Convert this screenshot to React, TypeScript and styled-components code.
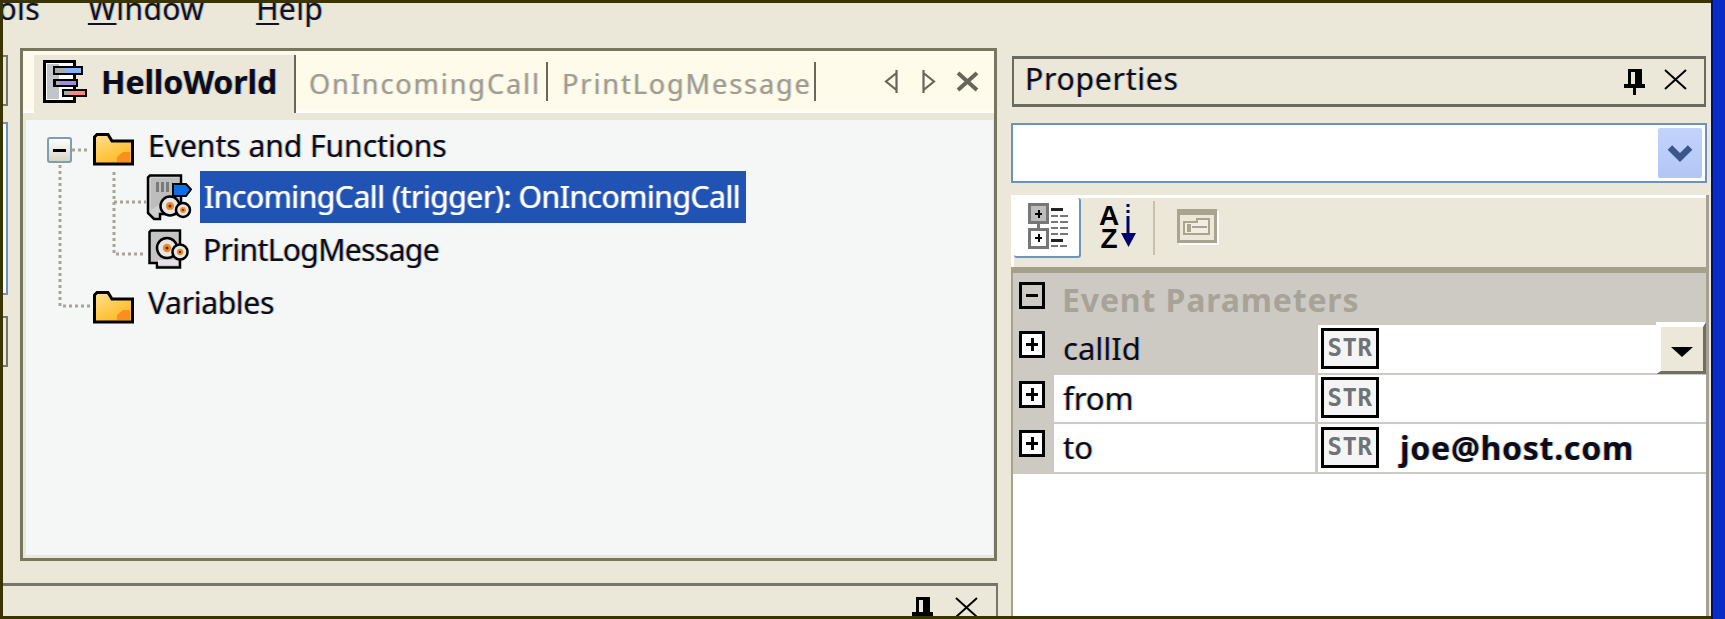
import React from "react";
import styled, { createGlobalStyle } from "styled-components";

const Global = createGlobalStyle`
  html, body { margin: 0; padding: 0; background: #ece8d9; }
  * { box-sizing: border-box; }
`;

const FONT = `"Noto Sans", "Liberation Sans", sans-serif`;
const fringe = `-1px 0 rgba(240,160,60,.55), 1px 0 rgba(50,160,240,.55)`;

const Screen = styled.div`
  width: 1725px; height: 619px; overflow: hidden; display: flex;
  font-family: ${FONT}; color: #0b0b1c; background: #ece8d9;
`;
const Frame = styled.div`
  width: 1711px; height: 619px; display: flex;
  border-top: 3px solid #3a3500; border-bottom: 3px solid #3a3500; border-left: 3px solid #3a3500;
`;
const BlueEdge = styled.div`
  width: 14px; height: 619px; background: #0a2cc6; border-left: 2px solid #04106a;
`;
const LeftPart = styled.div`
  width: 1010px; display: flex; flex-direction: column; flex: none;
`;
const MenuBar = styled.div`
  height: 45px; display: flex; align-items: flex-start; overflow: hidden; flex: none;
`;
const MenuItem = styled.span<{ $ml: number }>`
  margin-left: ${(p) => p.$ml}px; margin-top: -15px; font-size: 30px; line-height: 41px; color: #10102a;
  text-shadow: ${fringe}; letter-spacing: .4px;
  u { text-decoration-thickness: 2px; text-underline-offset: 3px; }
`;
const TopRow = styled.div`
  display: flex; height: 513px; flex: none;
`;
const LeftDock = styled.div`
  width: 17px; display: flex; flex-direction: column; padding-top: 7px; flex: none;
`;
const DockTab = styled.div`
  width: 5px; height: 51px; border-right: 2px solid #76766c; border-top: 2px solid #76766c; border-bottom: 2px solid #76766c; flex: none;
`;
const DockActive = styled.div`
  width: 5px; height: 173px; margin-top: 16px; margin-bottom: 21px; border: 2px solid #6b93bd; border-left: 0; background: #fff; flex: none;
`;
const TabPanel = styled.div`
  width: 977px; height: 513px; border: 3px solid #77775f; background: #ece8d9; display: flex; flex-direction: column; flex: none;
`;
const TabBar = styled.div`
  height: 62px; background: linear-gradient(#fffbea 59px, #fff 59px); display: flex; padding-left: 11px; padding-top: 4px; flex: none;
`;
const ActiveTab = styled.div`
  width: 262px; height: 58px; background: #ece8d9; border-right: 2px solid #68685a; display: flex; align-items: center; gap: 14px; padding-left: 9px; padding-bottom: 6px; font-weight: 700; font-size: 32px; letter-spacing: -.1px; text-shadow: ${fringe}; flex: none;
`;
const Tab = styled.div<{ $w: number; $pl: number }>`
  width: ${(p) => p.$w}px; height: 39px; margin-top: 7px; border-right: 2px solid #68685a; padding-left: ${(p) => p.$pl}px;
  display: flex; align-items: center; font-size: 27px; color: #a09c92; letter-spacing: 1.95px; white-space: nowrap; text-shadow: -1px 0 rgba(240,190,120,.4), 1px 0 rgba(120,190,240,.4); padding-top: 3px; flex: none;
`;
const TabNav = styled.div`
  margin-left: 68px; margin-top: 14px; display: flex; align-items: flex-start; flex: none;
`;
const Tree = styled.div`
  position: relative; margin: 7px 1px 3px 3px; padding-top: 8px; width: 967px; flex: 1; background: #f5f6f6; font-size: 30px;
`;
const Connectors = styled.svg`
  position: absolute; left: 0; top: 0; pointer-events: none;
`;
const TreeRow = styled.div<{ $h: number; $pl: number; $mt?: number }>`
  height: ${(p) => p.$h}px; margin-top: ${(p) => p.$mt ?? 0}px; padding-left: ${(p) => p.$pl}px; display: flex; align-items: center; white-space: nowrap;
`;
const Expander = styled.span`
  position: relative; width: 25px; height: 26px; margin-right: 21px; border: 2px solid #7f9db9; border-radius: 3px;
  background: linear-gradient(#fff, #d8d4c4); flex: none;
  &::after { content: ""; position: absolute; left: 4px; right: 4px; top: 10px; height: 3px; background: #000; }
`;
const TreeLabel = styled.span<{ $selected?: boolean; $ml: number; $ls?: number; $up?: number }>`
  margin-left: ${(p) => p.$ml}px; margin-top: ${(p) => -(p.$up ?? 0)}px; letter-spacing: ${(p) => p.$ls ?? 0}px; text-shadow: ${fringe};
  ${(p) => p.$selected ? `background: #2153b5; color: #fff; height: 52px; line-height: 52px; padding: 0 6px 0 4px; text-shadow: -1px 0 rgba(230,190,200,.5), 1px 0 rgba(120,200,250,.5);` : ""}
`;
const Icon = styled.svg`
  flex: none; display: block;
`;
const BottomPanel = styled.div`
  margin-top: 22px; width: 995px; height: 33px; border-top: 3px solid #76766c; border-right: 2px solid #76766c;
  display: flex; justify-content: flex-end; align-items: flex-start; gap: 22px; padding: 11px 18px 0 0; overflow: hidden; flex: none;
`;
const RightPart = styled.div`
  width: 695px; padding-top: 53px; display: flex; flex-direction: column; flex: none;
`;
const TitleBox = styled.div`
  width: 694px; height: 51px; margin-left: -1px; border: 2px solid #6a6a60; border-top-width: 3px; border-bottom-width: 3px; display: flex; align-items: center; padding-left: 11px; padding-right: 17px; font-size: 30px; text-shadow: ${fringe}; letter-spacing: .8px; flex: none;
`;
const TitleText = styled.span`
  flex: 1; margin-top: -6px;
`;
const TitleButtons = styled.div`
  display: flex; gap: 19px; align-items: flex-start;
`;
const Combo = styled.div`
  width: 696px; height: 60px; margin: 16px 0 0 -2px; background: #fff; border: 2px solid #6b93bd; display: flex; justify-content: flex-end; padding: 3px 3px; flex: none;
`;
const ComboButton = styled.div`
  width: 44px; height: 50px; background: linear-gradient(#c3d4fb, #b2c6f7); display: flex; align-items: center; justify-content: center; border-radius: 2px;
`;
const Sheet = styled.div`
  margin-top: 12px; margin-left: -2px; width: 698px; flex: 1; display: flex; flex-direction: column; border-right: 3px solid #a5a08f;
`;
const Toolbar = styled.div`
  height: 72px; background: #ece8d9; border-top: 3px solid #fff; border-left: 3px solid #fff; display: flex; align-items: flex-start; flex: none;
`;
const ToolActive = styled.div`
  width: 67px; height: 60px; background: #fff; border-right: 2px solid #6e96bd; border-bottom: 2px solid #6e96bd; border-radius: 3px; display: flex; align-items: center; justify-content: center; padding-left: 3px; padding-bottom: 2px; flex: none;
`;
const ToolIcon = styled.div<{ $ml: number; $mt: number }>`
  margin-left: ${(p) => p.$ml}px; margin-top: ${(p) => p.$mt}px; flex: none;
`;
const ToolSep = styled.div`
  width: 2px; height: 54px; margin-left: 16px; margin-top: 3px; background: #c7c0ab; flex: none;
`;
const GridBand = styled.div`
  height: 6px; background: #a59f8e; flex: none;
`;
const GridBody = styled.div`
  flex: 1; display: flex; flex-direction: column; background: #fff; border-left: 2px solid #a5a290;
`;
const GroupRow = styled.div`
  height: 52px; background: #cdcac4; display: flex; align-items: center; padding-left: 6px; flex: none;
`;
const GroupTitle = styled.span`
  margin-left: 17px; font-weight: 700; font-size: 32px; color: #a8a399; letter-spacing: .85px;
`;
const BoxBtn = styled.span<{ $plus?: boolean }>`
  position: relative; width: 26px; height: 27px; border: 3px solid #000; background: #fff; flex: none; align-self: flex-start; margin-top: 6px; margin-left: 6px;
  &::before { content: ""; position: absolute; left: 4px; right: 4px; top: 9px; height: 3px; background: #000; }
  ${(p) => p.$plus ? `&::after { content: ""; position: absolute; top: 4px; bottom: 4px; left: 8.5px; width: 3px; background: #000; }` : ""}
`;
const GroupBox = styled(BoxBtn)`
  background: #cdcac4; margin-left: 0; margin-top: 9px;
`;
const PropRow = styled.div<{ $h: number }>`
  position: relative; height: ${(p) => p.$h}px; display: grid; grid-template-columns: 41px 261px 1fr; column-gap: 0; background: #cdcac4; padding-bottom: 2px; flex: none;
`;
const Margin = styled.div`
  background: #cdcac4; display: flex;
`;
const PropName = styled.div<{ $selected?: boolean }>`
  background: ${(p) => (p.$selected ? "#cdcac4" : "#fff")}; display: flex; align-items: center; padding-left: 9px; font-size: 31px; padding-bottom: 2px; text-shadow: ${fringe};
`;
const PropValue = styled.div`
  margin-left: 3px; background: #fff; display: flex; align-items: center; padding-left: 3px; font-weight: 700; font-size: 32px; letter-spacing: .75px; text-shadow: ${fringe};
`;
const StrBadge = styled.span`
  width: 58px; height: 41px; border: 3px solid #000; background: #f5f5f5; display: flex; align-items: center; justify-content: center;
  font-family: "DejaVu Sans Mono", monospace; font-weight: 700; font-size: 24px; line-height: 1; color: #6e7378; letter-spacing: .5px; text-shadow: none; margin-top: -2px; flex: none;
`;
const ValueText = styled.span`
  margin-left: 21px; margin-top: -2px;
`;
const DropBtn = styled.div`
  position: absolute; right: 0; top: -3px; width: 50px; height: 52px; background: #ece8d9;
  border-top: 5px solid #fff; border-left: 5px solid #fff; border-right: 3px solid #716f64; border-bottom: 3px solid #716f64;
  display: flex; align-items: center; justify-content: center;
`;
const Triangle = styled.span`
  width: 0; height: 0; border-left: 11px solid transparent; border-right: 11px solid transparent; border-top: 10px solid #000; margin-top: 6px;
`;

const Folder = () => (
  <Icon width="41" height="33" viewBox="0 0 41 33">
    <defs>
      <linearGradient id="fg" x1="0" y1="0" x2="0.6" y2="1">
        <stop offset="0" stopColor="#ffe092" /><stop offset="1" stopColor="#ffb91e" />
      </linearGradient>
    </defs>
    <path d="M1.5 31V4L4 1.5H15L19 8H39.5V31Z" fill="url(#fg)" stroke="#000" strokeWidth="3" />
    <path d="M24 29V24L30 19H37V29Z" fill="#f88f20" />
  </Icon>
);

const Disk = ({ cx, cy, r }: { cx: number; cy: number; r: number }) => (
  <g>
    <circle cx={cx} cy={cy} r={r} fill="#e8e4e8" stroke="#000" strokeWidth="2.5" />
    <circle cx={cx} cy={cy} r={r * 0.42} fill="#ee8a22" />
    <circle cx={cx} cy={cy} r={r * 0.16} fill="#553300" />
  </g>
);

const TriggerIcon = () => (
  <Icon width="46" height="47" viewBox="0 0 46 47">
    <path d="M2 3.5L4 1.5H35V40H14V45H8L2 39Z" fill="#cfcfcf" stroke="#000" strokeWidth="2.5" />
    <path d="M5 4H33V30H14L5 36Z" fill="#bdbdbd" />
    <path d="M10 8h3v10h-3zM15 8h3v10h-3zM20 8h3v10h-3z" fill="#7a7a7a" />
    <path d="M27 10H40L45 15.5L40 22H27Z" fill="#0a6fe0" stroke="#000" strokeWidth="2" />
    <Disk cx={24} cy={32} r={9.5} />
    <Disk cx={37} cy={36} r={7} />
  </Icon>
);

const FuncIcon = () => (
  <Icon width="42" height="40" viewBox="0 0 42 40">
    <path d="M1.5 3L3 1.5H32V38.5H9V34H1.5Z" fill="#c4c4c4" stroke="#000" strokeWidth="2.5" />
    <path d="M10 31H30V36H10Z" fill="#eadfe8" />
    <Disk cx={19} cy={19} r={10} />
    <Disk cx={32} cy={23} r={7.5} />
  </Icon>
);

const TabIcon = () => (
  <Icon width="44" height="43" viewBox="0 0 44 43" shapeRendering="crispEdges">
    <rect x="1.5" y="1.5" width="30" height="40" fill="#fff" stroke="#000" strokeWidth="3" />
    <rect x="4" y="4" width="12" height="35" fill="#c3c3cb" />
    <rect x="10" y="6" width="30" height="9" fill="#000" />
    <rect x="12" y="8" width="10" height="5" fill="#aaa" />
    <rect x="22" y="8" width="16" height="5" fill="#7fb4ff" />
    <rect x="10" y="19" width="25" height="8" fill="#000" />
    <rect x="13" y="21" width="4" height="4" fill="#aaa" />
    <rect x="17" y="21" width="16" height="4" fill="#9c8ce8" />
    <rect x="19" y="29" width="25" height="8" fill="#000" />
    <rect x="21" y="31" width="6" height="4" fill="#aaa" />
    <rect x="27" y="31" width="15" height="4" fill="#f28a8a" />
  </Icon>
);

const ArrowLeft = () => (
  <Icon width="14" height="25" viewBox="0 0 14 25">
    <path d="M12.5 1V24M12.5 4L2 12.5L12.5 21" fill="none" stroke="#66665a" strokeWidth="2.2" />
  </Icon>
);
const ArrowRight = () => (
  <Icon width="14" height="25" viewBox="0 0 14 25" style={{ marginLeft: 24 }}>
    <path d="M1.5 1V24M1.5 4L12 12.5L1.5 21" fill="none" stroke="#66665a" strokeWidth="2.2" />
  </Icon>
);
const CloseBold = () => (
  <Icon width="23" height="21" viewBox="0 0 23 21" style={{ marginLeft: 20, marginTop: 2 }}>
    <path d="M2 2L21 19M21 2L2 19" stroke="#66665a" strokeWidth="4" />
  </Icon>
);
const Pin = () => (
  <Icon width="21" height="26" viewBox="0 0 21 26" shapeRendering="crispEdges">
    <path d="M5 1.5H16V17H5Z" fill="#ece8d9" stroke="#000" strokeWidth="3" />
    <rect x="11" y="3" width="4" height="14" fill="#000" />
    <rect x="0" y="15" width="21" height="4" fill="#000" />
    <rect x="9" y="19" width="3" height="7" fill="#000" />
  </Icon>
);
const CloseThin = () => (
  <Icon width="23" height="21" viewBox="0 0 23 21">
    <path d="M1 1L22 20M22 1L1 20" stroke="#000" strokeWidth="2" />
  </Icon>
);
const Chevron = () => (
  <Icon width="26" height="22" viewBox="0 0 28 24">
    <path d="M3 6L14 17L25 6" fill="none" stroke="#39578c" strokeWidth="7" />
  </Icon>
);
const CategorizedIcon = () => (
  <Icon width="41" height="46" viewBox="0 0 41 46" shapeRendering="crispEdges">
    <rect x="1.5" y="1.5" width="18" height="18" fill="#bdbdbd" stroke="#777" strokeWidth="3" />
    <path d="M7 10h7v2h-7zM9.5 7h2v8h-2z" fill="#000" />
    <rect x="9" y="20" width="3" height="6" fill="#777" />
    <rect x="1.5" y="26" width="18" height="18" fill="#fff" stroke="#777" strokeWidth="3" />
    <path d="M7 34h7v2h-7zM9.5 31h2v8h-2z" fill="#000" />
    <path d="M23 5h12v3H23z" fill="#222" />
    <path d="M23 12h7v2h-7zM32 12h8v2h-8zM23 18h7v2h-7zM32 18h8v2h-8zM23 24h7v2h-7zM32 24h8v2h-8zM23 30h7v2h-7zM32 30h8v2h-8zM23 42h7v2h-7zM32 42h7v2h-7z" fill="#777" />
    <path d="M23 36h12v3H23z" fill="#222" />
  </Icon>
);
const SortIcon = () => (
  <Icon width="38" height="44" viewBox="0 0 38 44">
    <text x="10" y="21" textAnchor="middle" fontFamily="Liberation Sans" fontWeight="700" fontSize="28" fill="#000">A</text>
    <text x="10" y="44" textAnchor="middle" fontFamily="Liberation Sans" fontWeight="700" fontSize="28" fill="#000">Z</text>
    <path d="M29 0v3M29 6v3M29 12v22" stroke="#00006a" strokeWidth="3" />
    <path d="M22 29H37L29.5 43Z" fill="#00006a" />
  </Icon>
);
const PagesIcon = () => (
  <Icon width="42" height="36" viewBox="0 0 42 36" shapeRendering="crispEdges">
    <rect x="2" y="2" width="40" height="34" fill="#fff" />
    <rect x="0" y="0" width="40" height="34" fill="#ece8d9" />
    <rect x="0" y="0" width="40" height="6" fill="#a8a490" />
    <rect x="1.5" y="1.5" width="37" height="31" fill="none" stroke="#a8a490" strokeWidth="3" />
    <path d="M7 13H20V10H32V25H7Z" fill="#f1eee2" stroke="#a8a490" strokeWidth="2" />
    <path d="M11 16h2v2h-2zM11 20h2v2h-2zM15 18H30" stroke="#a8a490" strokeWidth="2" />
  </Icon>
);

export default function App() {
  return (
    <Screen>
      <Global />
      <Frame>
        <LeftPart>
          <MenuBar>
            <MenuItem $ml={-38}>Tools</MenuItem>
            <MenuItem $ml={48}><u>W</u>indow</MenuItem>
            <MenuItem $ml={52}><u>H</u>elp</MenuItem>
          </MenuBar>
          <TopRow>
            <LeftDock>
              <DockTab />
              <DockActive />
              <DockTab />
            </LeftDock>
            <TabPanel>
              <TabBar>
                <ActiveTab><TabIcon />HelloWorld</ActiveTab>
                <Tab $w={252} $pl={13}>OnIncomingCall</Tab>
                <Tab $w={268} $pl={14}>PrintLogMessage</Tab>
                <TabNav><ArrowLeft /><ArrowRight /><CloseBold /></TabNav>
              </TabBar>
              <Tree>
                <Connectors width="130" height="198">
                  <g fill="none" stroke="#a8a498" strokeWidth="3" strokeDasharray="3 3">
                    <path d="M46 30H64" />
                    <path d="M34 45V186H64" />
                    <path d="M88 52V134H120" />
                    <path d="M88 82H120" />
                  </g>
                </Connectors>
                <TreeRow $h={43} $pl={21}>
                  <Expander />
                  <Folder />
                  <TreeLabel $ml={14} $up={8}>Events and Functions</TreeLabel>
                </TreeRow>
                <TreeRow $h={52} $pl={120}>
                  <TriggerIcon />
                  <TreeLabel $selected $ml={8} $ls={-0.4}>IncomingCall (trigger): OnIncomingCall</TreeLabel>
                </TreeRow>
                <TreeRow $h={52} $pl={122}>
                  <FuncIcon />
                  <TreeLabel $ml={13} $ls={-0.6}>PrintLogMessage</TreeLabel>
                </TreeRow>
                <TreeRow $h={52} $pl={67} $mt={6}>
                  <Folder />
                  <TreeLabel $ml={14} $ls={-0.3} $up={9}>Variables</TreeLabel>
                </TreeRow>
              </Tree>
            </TabPanel>
          </TopRow>
          <BottomPanel>
            <Pin />
            <CloseThin />
          </BottomPanel>
        </LeftPart>
        <RightPart>
          <TitleBox>
            <TitleText>Properties</TitleText>
            <TitleButtons><Pin /><CloseThin /></TitleButtons>
          </TitleBox>
          <Combo><ComboButton><Chevron /></ComboButton></Combo>
          <Sheet>
            <Toolbar>
              <ToolActive><CategorizedIcon /></ToolActive>
              <ToolIcon $ml={18} $mt={6}><SortIcon /></ToolIcon>
              <ToolSep />
              <ToolIcon $ml={22} $mt={11}><PagesIcon /></ToolIcon>
            </Toolbar>
            <GridBand />
            <GridBody>
              <GroupRow>
                <GroupBox />
                <GroupTitle>Event Parameters</GroupTitle>
              </GroupRow>
              <PropRow $h={50}>
                <Margin><BoxBtn $plus /></Margin>
                <PropName $selected>callId</PropName>
                <PropValue><StrBadge>STR</StrBadge></PropValue>
                <DropBtn><Triangle /></DropBtn>
              </PropRow>
              <PropRow $h={49}>
                <Margin><BoxBtn $plus /></Margin>
                <PropName>from</PropName>
                <PropValue><StrBadge>STR</StrBadge></PropValue>
              </PropRow>
              <PropRow $h={50}>
                <Margin><BoxBtn $plus /></Margin>
                <PropName>to</PropName>
                <PropValue><StrBadge>STR</StrBadge><ValueText>joe@host.com</ValueText></PropValue>
              </PropRow>
            </GridBody>
          </Sheet>
        </RightPart>
      </Frame>
      <BlueEdge />
    </Screen>
  );
}
